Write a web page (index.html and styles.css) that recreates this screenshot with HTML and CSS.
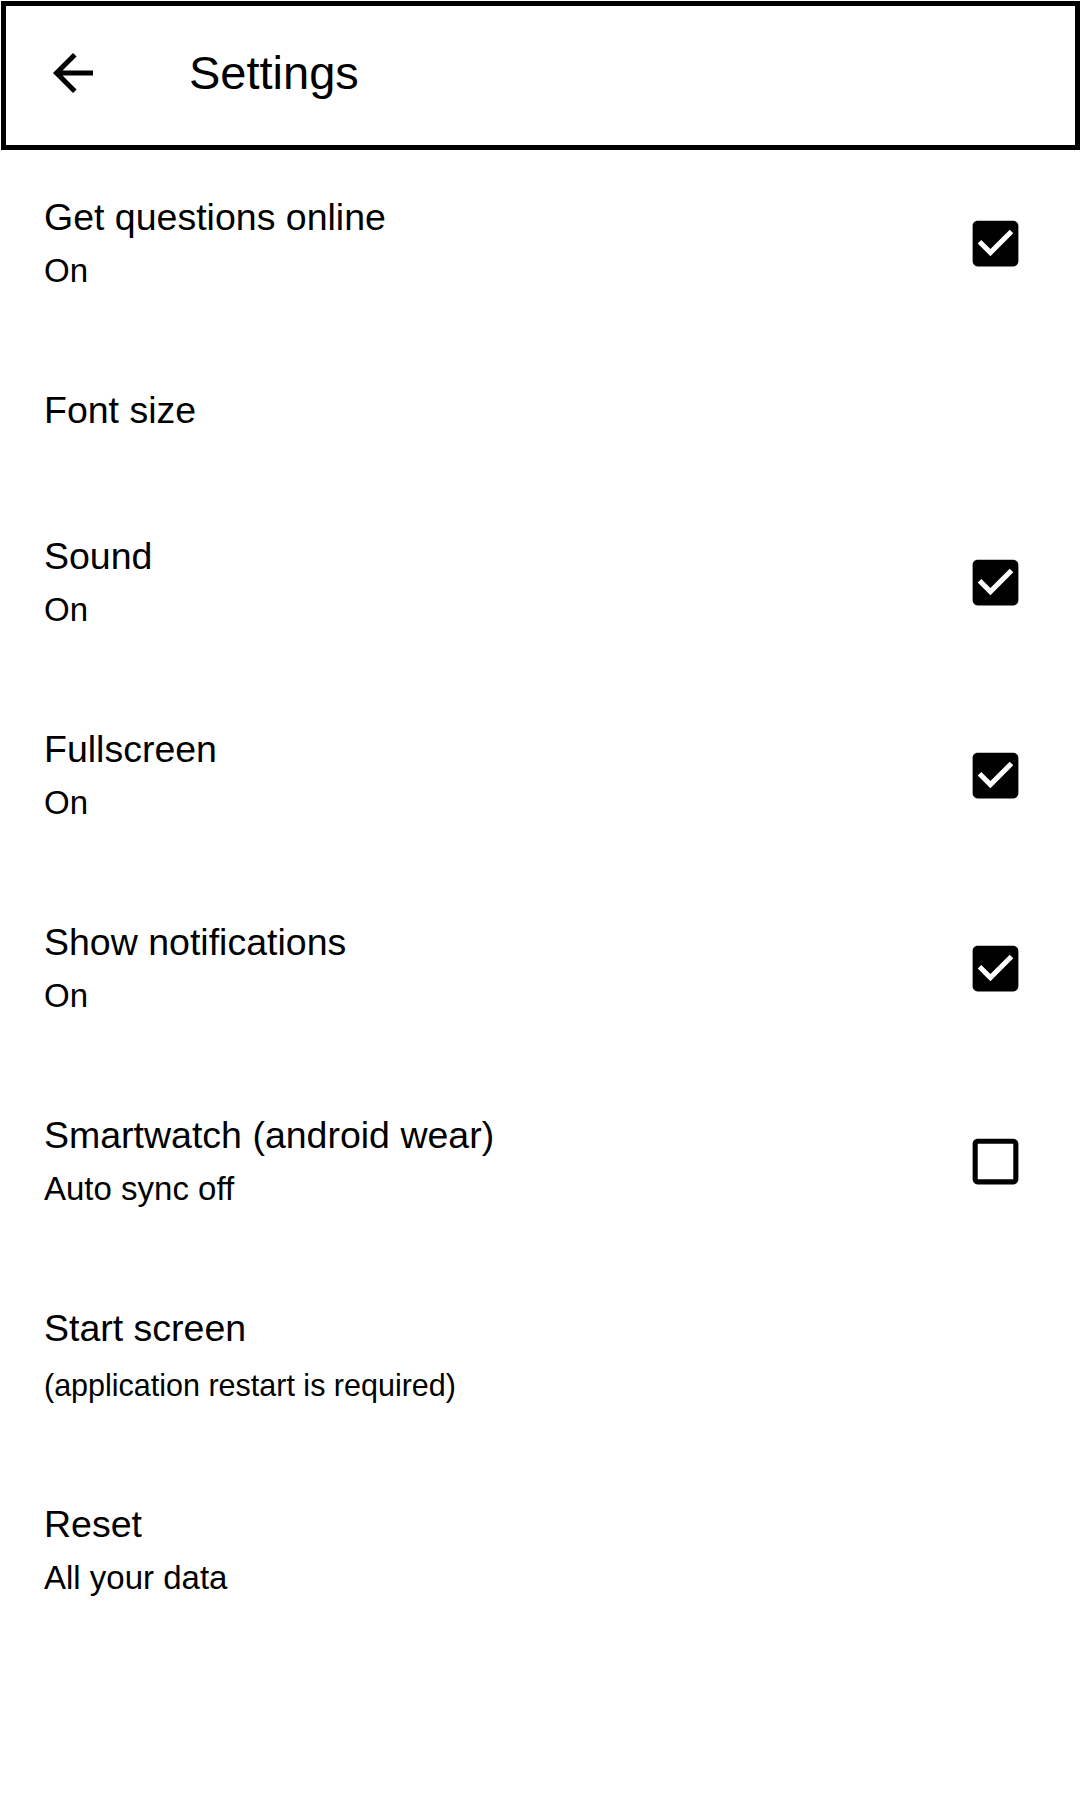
FILE: index.html
```html
<!DOCTYPE html>
<html lang="en">
<head>
<meta charset="utf-8">
<title>Settings</title>
<link rel="stylesheet" href="styles.css">
</head>
<body>
<header class="topbar">
  <svg class="back-icon" viewBox="0 0 24 24" width="60" height="60" aria-hidden="true"><path d="M20 11H7.830l5.59-5.59L12 4l-8 8 8 8 1.41-1.41L7.83 13H20v-2z"/></svg>
  <h1 class="title">Settings</h1>
</header>
<main class="list">
  <div class="row">
    <div class="texts">
      <div class="row-title">Get questions online</div>
      <div class="row-sub">On</div>
    </div>
    <svg class="check" viewBox="0 0 24 24" width="61" height="61" aria-hidden="true"><path d="M19 3H5c-1.11 0-2 .9-2 2v14c0 1.1.89 2 2 2h14c1.11 0 2-.9 2-2V5c0-1.1-.89-2-2-2zm-9 14l-5-5 1.41-1.41L10 14.17l7.59-7.59L19 8l-9 9z"/></svg>
  </div>
  <div class="row row-single">
    <div class="texts">
      <div class="row-title">Font size</div>
    </div>
  </div>
  <div class="row">
    <div class="texts">
      <div class="row-title">Sound</div>
      <div class="row-sub">On</div>
    </div>
    <svg class="check" viewBox="0 0 24 24" width="61" height="61" aria-hidden="true"><path d="M19 3H5c-1.11 0-2 .9-2 2v14c0 1.1.89 2 2 2h14c1.11 0 2-.9 2-2V5c0-1.1-.89-2-2-2zm-9 14l-5-5 1.41-1.41L10 14.17l7.59-7.59L19 8l-9 9z"/></svg>
  </div>
  <div class="row">
    <div class="texts">
      <div class="row-title">Fullscreen</div>
      <div class="row-sub">On</div>
    </div>
    <svg class="check" viewBox="0 0 24 24" width="61" height="61" aria-hidden="true"><path d="M19 3H5c-1.11 0-2 .9-2 2v14c0 1.1.89 2 2 2h14c1.11 0 2-.9 2-2V5c0-1.1-.89-2-2-2zm-9 14l-5-5 1.41-1.41L10 14.17l7.59-7.59L19 8l-9 9z"/></svg>
  </div>
  <div class="row">
    <div class="texts">
      <div class="row-title">Show notifications</div>
      <div class="row-sub">On</div>
    </div>
    <svg class="check" viewBox="0 0 24 24" width="61" height="61" aria-hidden="true"><path d="M19 3H5c-1.11 0-2 .9-2 2v14c0 1.1.89 2 2 2h14c1.11 0 2-.9 2-2V5c0-1.1-.89-2-2-2zm-9 14l-5-5 1.41-1.41L10 14.17l7.59-7.59L19 8l-9 9z"/></svg>
  </div>
  <div class="row">
    <div class="texts">
      <div class="row-title">Smartwatch (android wear)</div>
      <div class="row-sub">Auto sync off</div>
    </div>
    <svg class="check" viewBox="0 0 24 24" width="61" height="61" aria-hidden="true"><path d="M19 5v14H5V5h14m0-2H5c-1.1 0-2 .9-2 2v14c0 1.1.9 2 2 2h14c1.1 0 2-.9 2-2V5c0-1.1-.9-2-2-2z"/></svg>
  </div>
  <div class="row">
    <div class="texts">
      <div class="row-title">Start screen</div>
      <div class="row-sub row-sub-small">(application restart is required)</div>
    </div>
  </div>
  <div class="row">
    <div class="texts">
      <div class="row-title">Reset</div>
      <div class="row-sub">All your data</div>
    </div>
  </div>
</main>
</body>
</html>
```
FILE: styles.css
```css
* {
  box-sizing: border-box;
}

html, body {
  margin: 0;
  padding: 0;
  background: #ffffff;
}

body {
  width: 1080px;
  font-family: "Liberation Sans", Arial, sans-serif;
  color: #000000;
}

.topbar {
  margin: 1px 0 0 1px;
  width: 1079px;
  height: 149px;
  border: 5px solid #000000;
  display: flex;
  align-items: center;
  padding: 0 0 6px 37px;
}

.back-icon {
  display: block;
  fill: #000000;
  flex: none;
}

.title {
  margin: 0 0 0 86px;
  font-size: 47px;
  font-weight: 400;
  line-height: 52px;
}

.list {
  display: flex;
  flex-direction: column;
}

.row {
  display: flex;
  align-items: center;
  justify-content: space-between;
  padding: 45px 54px 52px 44px;
}

.row-single {
  padding-bottom: 57px;
}

.texts {
  display: flex;
  flex-direction: column;
}

.row-title {
  font-size: 37.5px;
  line-height: 44px;
}

.row-sub {
  margin-top: 12px;
  font-size: 33px;
  line-height: 40px;
}

.row-sub-small {
  margin-top: 15px;
  font-size: 30.5px;
}

.check {
  display: block;
  fill: #000000;
  flex: none;
}
```
